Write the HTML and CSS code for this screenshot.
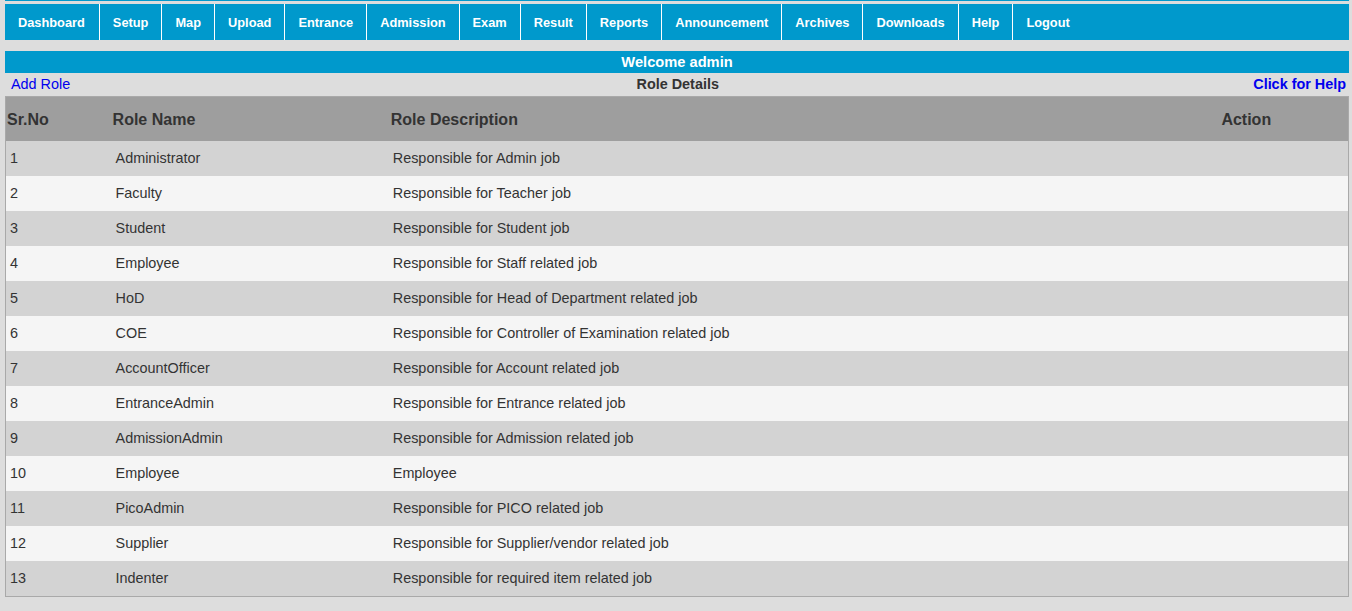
FILE: index.html
```html
<!DOCTYPE html>
<html>
<head>
<meta charset="utf-8">
<title>Role Details</title>
<link rel="stylesheet" href="styles.css">
</head>
<body>
<div class="page">
  <div class="topline"></div>
  <ul class="nav">
    <li>Dashboard</li>
    <li>Setup</li>
    <li>Map</li>
    <li>Upload</li>
    <li>Entrance</li>
    <li>Admission</li>
    <li>Exam</li>
    <li>Result</li>
    <li>Reports</li>
    <li>Announcement</li>
    <li>Archives</li>
    <li>Downloads</li>
    <li>Help</li>
    <li>Logout</li>
  </ul>
  <div class="welcome">Welcome admin</div>
  <div class="subbar">
    <a class="add" href="#">Add Role</a>
    <span class="title">Role Details</span>
    <a class="help" href="#">Click for Help</a>
  </div>
  <table class="roles">
    <colgroup>
      <col class="c1"><col class="c2"><col class="c3"><col class="c4">
    </colgroup>
    <thead>
      <tr><th>Sr.No</th><th>Role Name</th><th>Role Description</th><th>Action</th></tr>
    </thead>
    <tbody>
      <tr><td>1</td><td>Administrator</td><td>Responsible for Admin job</td><td></td></tr>
      <tr><td>2</td><td>Faculty</td><td>Responsible for Teacher job</td><td></td></tr>
      <tr><td>3</td><td>Student</td><td>Responsible for Student job</td><td></td></tr>
      <tr><td>4</td><td>Employee</td><td>Responsible for Staff related job</td><td></td></tr>
      <tr><td>5</td><td>HoD</td><td>Responsible for Head of Department related job</td><td></td></tr>
      <tr><td>6</td><td>COE</td><td>Responsible for Controller of Examination related job</td><td></td></tr>
      <tr><td>7</td><td>AccountOfficer</td><td>Responsible for Account related job</td><td></td></tr>
      <tr><td>8</td><td>EntranceAdmin</td><td>Responsible for Entrance related job</td><td></td></tr>
      <tr><td>9</td><td>AdmissionAdmin</td><td>Responsible for Admission related job</td><td></td></tr>
      <tr><td>10</td><td>Employee</td><td>Employee</td><td></td></tr>
      <tr><td>11</td><td>PicoAdmin</td><td>Responsible for PICO related job</td><td></td></tr>
      <tr><td>12</td><td>Supplier</td><td>Responsible for Supplier/vendor related job</td><td></td></tr>
      <tr><td>13</td><td>Indenter</td><td>Responsible for required item related job</td><td></td></tr>
    </tbody>
  </table>
</div>
</body>
</html>
```

FILE: styles.css
```css
html, body {
  margin: 0;
  padding: 0;
  background: #dddddd;
  font-family: "Liberation Sans", Arial, sans-serif;
  color: #333333;
}

.page {
  padding: 0 3px 0 5px;
}

.topline {
  height: 1px;
  background: #0099cc;
}

.nav {
  list-style: none;
  margin: 3px 0 0 0;
  padding: 0;
  display: flex;
  height: 36px;
  background: #0099cc;
}

.nav li {
  display: flex;
  align-items: center;
  padding: 0 13px;
  border-right: 1px solid #ffffff;
  color: #ffffff;
  font-weight: bold;
  font-size: 12.8px;
}

.nav li:first-child {
  padding-right: 14px;
}

.nav li:last-child {
  border-right: none;
}

.welcome {
  margin-top: 11px;
  height: 22px;
  line-height: 22px;
  background: #0099cc;
  color: #ffffff;
  font-weight: bold;
  font-size: 14.67px;
  text-align: center;
}

.subbar {
  height: 23px;
  display: flex;
  align-items: center;
  justify-content: space-between;
  font-size: 14.4px;
  padding: 0 3px 2px 6px;
  box-sizing: border-box;
}

.subbar a {
  color: #0000ee;
  text-decoration: none;
}

.subbar .help {
  font-weight: bold;
}

.subbar .title {
  font-weight: bold;
  color: #333333;
  position: relative;
  left: 16px;
}

.roles {
  width: 100%;
  border-collapse: collapse;
  border: 1px solid #a9a9a9;
  table-layout: fixed;
  font-size: 14.4px;
}

.c1 { width: 106px; }
.c2 { width: 278px; }
.c3 { width: 830px; }
.c4 { width: 128px; }

.roles th {
  background: #9e9e9e;
  text-align: left;
  font-size: 16px;
  font-weight: bold;
  color: #333333;
  height: 42px;
  padding: 2px 0 0 1px;
}

.roles td {
  height: 35px;
  padding: 0 0 1px 4px;
  box-sizing: border-box;
  color: #333333;
}

.roles td:nth-child(3) {
  padding-left: 3px;
}

.roles tbody tr:nth-child(odd) td {
  background: #d3d3d3;
}

.roles tbody tr:nth-child(even) td {
  background: #f5f5f5;
}
```
